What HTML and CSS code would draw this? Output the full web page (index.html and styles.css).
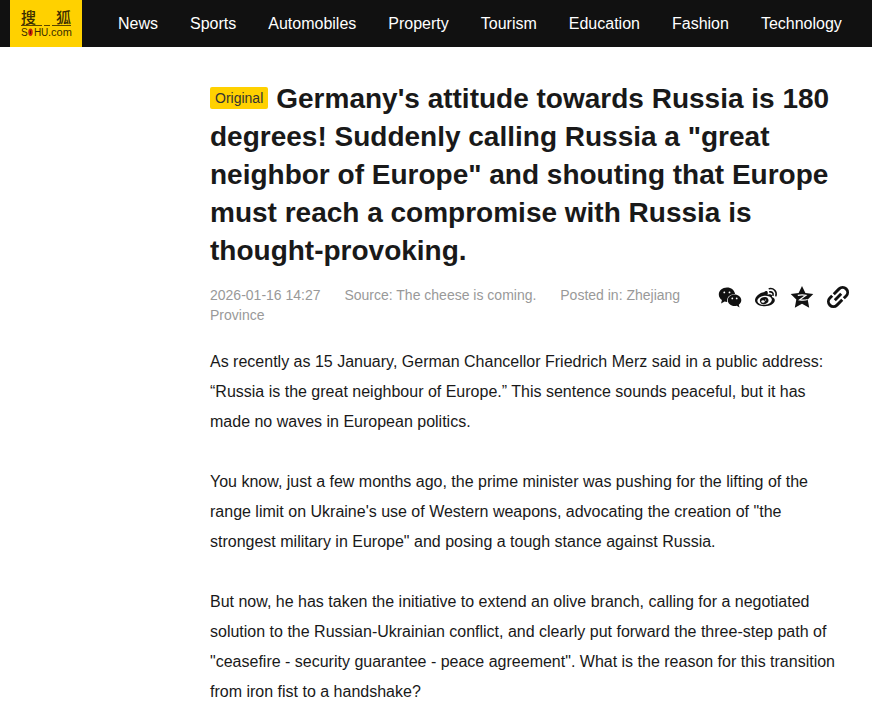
FILE: index.html
```html
<!DOCTYPE html>
<html lang="en">

<head>
    <meta charset="UTF-8">
    <meta name="viewport" content="width=device-width, initial-scale=1.0">
    <title>Germany's attitude towards Russia is 180 degrees!</title>
    <link rel="stylesheet" href="styles.css">
</head>

<body>
    <header class="site-header">
        <a class="logo" href="#" aria-label="Sohu">
            <svg width="72" height="47" viewBox="0 0 72 47">
                <g class="logo-cn">
                    <text x="11" y="23">搜</text>
                    <text x="46" y="23">狐</text>
                </g>
                <path d="M11 25.500h21M34 25.500h6M42 25.500h19" stroke="#5a4600" stroke-width="1" />
                <g class="logo-en">
                    <text x="11" y="36">S</text>
                    <text x="24" y="36">H</text>
                    <text x="31" y="36">U</text>
                    <text class="logo-com" x="38" y="36">.com</text>
                </g>
                <ellipse cx="20.500" cy="32.200" rx="2.200" ry="3.700" fill="#c8200c" />
                <path d="M20.500 30.500v3.400" stroke="#5e0e06" stroke-width="1" />
            </svg>
        </a>
        <nav class="main-nav">
            <a href="#">News</a>
            <a href="#">Sports</a>
            <a href="#">Automobiles</a>
            <a href="#">Property</a>
            <a href="#">Tourism</a>
            <a href="#">Education</a>
            <a href="#">Fashion</a>
            <a href="#">Technology</a>
        </nav>
    </header>

    <main class="article">
        <h1><span class="tag">Original</span>Germany's attitude towards Russia is 180 degrees! Suddenly calling Russia a "great neighbor of Europe" and shouting that Europe must reach a compromise with Russia is thought-provoking.</h1>

        <div class="article-info">
            <p class="meta">
                <span>2026-01-16 14:27</span>
                <span>Source: The cheese is coming.</span>
                <span>Posted in: Zhejiang Province</span>
            </p>

            <!-- Share buttons -->
            <div class="share">
                <button type="button" aria-label="WeChat">
                    <svg viewBox="0 0 24 24">
                        <path d="M9 2.500C4.300 2.500.8 5.600.8 9.500c0 2.300 1.200 4.200 3.100 5.500L3.100 18.500l3.500-1.900c.8.200 1.600.3 2.400.3h.2c-.9-4.300 2.700-8 7.900-7.900C16.500 5.200 13.200 2.500 9 2.500z" />
                        <path d="M16.500 9.600c-3.700 0-6.700 2.500-6.700 5.700s3 5.800 6.700 5.800c.8 0 1.600-.1 2.300-.3l2.700 1.600-.7-2.700c1.500-1.100 2.500-2.600 2.500-4.400 0-3.200-3.100-5.700-6.800-5.700z" />
                        <g fill="#fff">
                            <circle cx="6.300" cy="7.400" r=".9" />
                            <circle cx="11.500" cy="7.400" r=".9" />
                            <circle cx="14.300" cy="13.400" r=".9" />
                            <circle cx="18.700" cy="13.400" r=".9" />
                        </g>
                    </svg>
                </button>
                <button type="button" aria-label="Weibo">
                    <svg viewBox="0 0 24 24">
                        <path d="M10 7.200C11.800 5.500 14 5.700 13.800 8.500c0 .6-.3 1.300-.3 1.300s3-1.400 4.300.1c.7.800 0 2.200 0 2.200 1.800.5 3 1.500 3 3.200 0 3.200-4.600 6-10 6C5.400 21.300 1 18.900 1 15.300 1 11.800 5.800 7.200 10 7.200z" />
                        <ellipse cx="10.600" cy="15.300" rx="7.300" ry="4.500" fill="#fff" transform="rotate(-6 10.600 15.300)" />
                        <ellipse cx="10.200" cy="15.600" rx="4.300" ry="3.500" transform="rotate(-18 10.200 15.600)" />
                        <ellipse cx="9" cy="16.500" rx="1.700" ry="1.300" fill="#fff" />
                        <circle cx="11.600" cy="15" r=".6" fill="#fff" />
                        <path d="M15.300 3.700c4.200-.9 7.800 2.700 6.600 7M15.800 6.900c2.200-.4 3.800 1.200 3.200 3.300" fill="none" stroke="#111" stroke-width="1.600" stroke-linecap="round" />
                    </svg>
                </button>
                <button type="button" aria-label="Qzone">
                    <svg viewBox="0 0 24 24">
                        <path d="M12 1l3.400 7 7.900 1-5.600 5.600 1.500 8.200-7.200-4-7.200 4 1.500-8.200L.7 9l7.900-1z" />
                        <path d="M7.800 10.300c3-.6 5.700-.6 8.200 0L9.600 14.800c3.300.5 5.500.4 8-.3" fill="none" stroke="#fff" stroke-width="1.200" />
                    </svg>
                </button>
                <button type="button" aria-label="Copy link">
                    <svg viewBox="0 0 24 24">
                        <g fill="none" stroke="#111" stroke-width="2.900" transform="rotate(-45 12 12)">
                            <path d="M11 7h7.500a5 5 0 0 1 0 10h-3.300" />
                            <path d="M13 17H5.500a5 5 0 0 1 0-10h3.300" />
                            <path d="M7.500 12h9" />
                        </g>
                    </svg>
                </button>
            </div>
        </div>

        <div class="article-body">
            <p>As recently as 15 January, German Chancellor Friedrich Merz said in a public address: “Russia is the great neighbour of Europe.” This sentence sounds peaceful, but it has made no waves in European politics.</p>
            <p>You know, just a few months ago, the prime minister was pushing for the lifting of the range limit on Ukraine's use of Western weapons, advocating the creation of "the strongest military in Europe" and posing a tough stance against Russia.</p>
            <p>But now, he has taken the initiative to extend an olive branch, calling for a negotiated solution to the Russian-Ukrainian conflict, and clearly put forward the three-step path of "ceasefire - security guarantee - peace agreement". What is the reason for this transition from iron fist to a handshake?</p>
        </div>
    </main>
</body>

</html>
```
FILE: styles.css
```css
body {
    margin: 0;
    background-color: #fff;
    color: #191919;
    font-family: "Liberation Sans", Arial, "Noto Sans CJK SC", sans-serif;
    font-size: 16px;
}

/* Header */
.site-header {
    display: flex;
    align-items: center;
    padding-left: 10px;
    background-color: #111;
}

.logo {
    flex: none;
    background-color: #ffd100;
}

.logo svg {
    display: block;
}

.logo text {
    fill: #3a2d00;
}

.logo-cn {
    font-family: "Noto Sans CJK SC", sans-serif;
    font-size: 15px;
    font-weight: 500;
}

.logo-en {
    font-size: 10px;
}

.logo .logo-com {
    font-size: 11px;
}

.main-nav {
    display: flex;
    gap: 32px;
    margin-left: 36px;
}

.main-nav a {
    color: #fff;
    text-decoration: none;
    white-space: nowrap;
}

/* Article */
.article {
    max-width: 640px;
    margin-left: 210px;
    padding: 33px 22px 0 0;
}

h1 {
    margin: 0 0 15px;
    font-size: 28px;
    line-height: 38px;
}

.tag {
    display: inline-block;
    margin-right: 8px;
    padding: 0 5px;
    border-radius: 2px;
    background-color: #ffd100;
    color: #333;
    font-size: 14px;
    font-weight: normal;
    line-height: 22px;
    vertical-align: 5px;
}

.article-info {
    display: flex;
    justify-content: space-between;
    gap: 24px;
    margin-bottom: 22px;
}

.meta {
    margin: 0;
    color: #999;
    font-size: 14px;
    line-height: 20px;
}

.meta span {
    margin-right: 20px;
}

.share {
    display: flex;
    flex: none;
    align-items: flex-start;
    gap: 12px;
}

.share button {
    width: 24px;
    height: 24px;
    padding: 0;
    border: none;
    background: none;
    cursor: pointer;
}

.share svg {
    display: block;
    width: 24px;
    height: 24px;
    fill: #111;
}

.article-body p {
    margin: 0 0 30px;
    line-height: 30px;
}
```
